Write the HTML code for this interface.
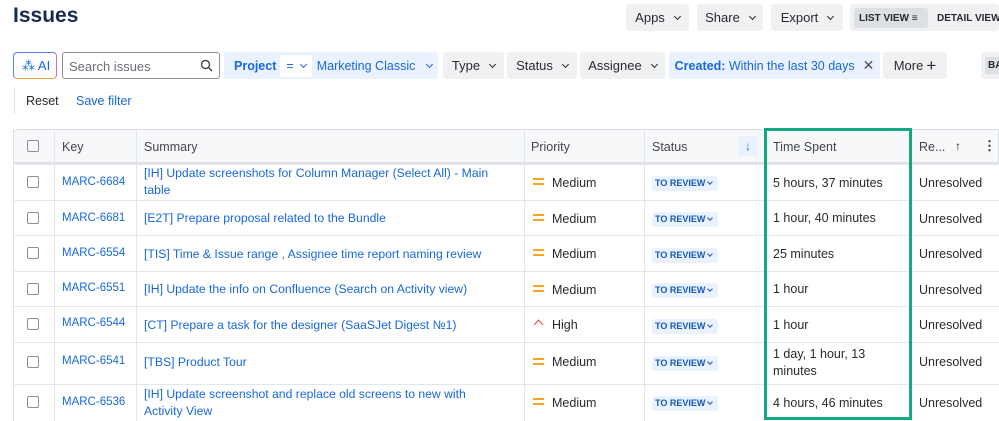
<!DOCTYPE html>
<html><head><meta charset="utf-8"><style>
*{box-sizing:border-box;margin:0;padding:0}
body{width:999px;height:421px;overflow:hidden;background:#fff;font-family:"Liberation Sans",sans-serif;color:#292a2e;position:relative;font-size:13px}
.a{position:absolute}
.btn{position:absolute;background:#f0f1f2;border-radius:3px;display:flex;align-items:center;justify-content:center;font-size:13px;color:#292a2e;white-space:nowrap}
.chev{display:inline-block;width:5px;height:5px;border-right:1.6px solid currentColor;border-bottom:1.6px solid currentColor;transform:rotate(45deg);margin-left:10px;margin-top:-3px}
.blue{color:#1868db}
.hl{position:absolute;background:#e3e6ea;height:1px;left:13px;width:986px}
.vl{position:absolute;background:#e3e6ea;width:1px;top:129px;height:292px}
.cb{position:absolute;left:27px;width:12px;height:12px;border:1.5px solid #8c8f97;border-radius:2px}
.key{position:absolute;left:62px;font-size:11.5px;color:#1868db}
.sum{position:absolute;left:144px;font-size:12.2px;color:#1868db;line-height:17px;width:350px}
.pri{position:absolute;left:552px;font-size:12.5px}
.eq{position:absolute;left:533px;width:11px;height:7px;border-top:2px solid #f5a623;border-bottom:2px solid #f5a623}
.st{position:absolute;left:652px;background:#e9f2fe;color:#1558bc;font-size:9px;font-weight:bold;padding:2px 3px;border-radius:3px;height:15px;width:66px;line-height:11px;white-space:nowrap}
.st i{display:inline-block;width:4px;height:4px;border-right:1.3px solid #1558bc;border-bottom:1.3px solid #1558bc;transform:rotate(45deg);margin-left:3px;margin-bottom:2px}
.ts{position:absolute;left:773px;font-size:12.5px;line-height:17px;width:130px}
.res{position:absolute;left:919px;font-size:12.5px}
.th{position:absolute;top:140px;font-size:12.5px;color:#44464d}
</style></head><body>
<div class="a" style="left:13px;top:4px;font-size:21px;font-weight:bold;color:#172b4d">Issues</div>

<div class="btn" style="left:626px;top:4px;width:63px;height:27px">Apps<span class="chev"></span></div>
<div class="btn" style="left:697px;top:4px;width:66px;height:27px">Share<span class="chev"></span></div>
<div class="btn" style="left:771px;top:4px;width:72px;height:27px">Export<span class="chev"></span></div>
<div class="btn" style="left:850px;top:4px;width:149px;height:27px;justify-content:flex-start"></div>
<div class="a" style="left:854px;top:8px;width:74px;height:20px;background:#dcdfe4;border-radius:3px;font-size:10px;font-weight:bold;padding:5px 0 0 5px;color:#292a2e;white-space:nowrap">LIST VIEW <span style="font-weight:normal">&#8801;</span></div>
<div class="a" style="left:937px;top:13px;font-size:10px;font-weight:bold;color:#292a2e;white-space:nowrap">DETAIL VIEW</div>

<div class="a" style="left:13px;top:52px;width:44px;height:27px;border:1.5px solid #5b7ff5;border-right-color:#c66de0;border-bottom-color:#e8a040;border-radius:4px;font-size:13px;color:#1868db;padding:5px 0 0 8px;white-space:nowrap">&#8258; AI</div>
<div class="a" style="left:62px;top:52px;width:158px;height:27px;border:1px solid #8c8f97;border-radius:3px;font-size:13px;color:#6b6e76;padding:6px 0 0 6px">Search issues
<svg class="a" style="left:137px;top:6px" width="13" height="13" viewBox="0 0 13 13"><circle cx="5.5" cy="5.5" r="4" fill="none" stroke="#44464d" stroke-width="1.4"/><path d="M8.5 8.5L12 12" stroke="#44464d" stroke-width="1.4"/></svg></div>
<div class="btn blue" style="left:224px;top:52px;width:214px;height:27px;background:#e9f2fe;justify-content:flex-start;padding-left:10px;font-size:12.5px"><b>Project</b><span style="background:#fff;border-radius:3px;padding:4px 6px;margin:0 5px 0 4px;display:inline-flex;align-items:center">=<span class="chev" style="margin-left:7px"></span></span>Marketing Classic<span class="chev" style="margin-left:12px"></span></div>
<div class="btn" style="left:443px;top:52px;width:61px;height:27px">Type<span class="chev"></span></div>
<div class="btn" style="left:507px;top:52px;width:70px;height:27px">Status<span class="chev"></span></div>
<div class="btn" style="left:580px;top:52px;width:85px;height:27px">Assignee<span class="chev"></span></div>
<div class="btn blue" style="left:669px;top:52px;width:211px;height:27px;background:#e9f2fe;font-size:12.5px"><b>Created:</b>&nbsp;Within the last 30 days<span style="color:#505258;margin-left:8px;font-size:14px">&#10005;</span></div>
<div class="btn" style="left:883px;top:52px;width:64px;height:27px">More <span style="font-size:17px;margin-left:3px">+</span></div>
<div class="btn" style="left:981px;top:52px;width:20px;height:27px;justify-content:flex-start;padding-left:4px"><span style="background:#dcdfe4;padding:3px;font-size:10px;font-weight:bold">BA</span></div>

<div class="a" style="left:14px;top:87px;width:1px;height:27px;background:#dcdfe4"></div>
<div class="a" style="left:26px;top:94px;font-size:12.5px">Reset</div>
<div class="a blue" style="left:76px;top:94px;font-size:12.5px">Save filter</div>

<div class="a" style="left:13px;top:129px;width:986px;height:34px;background:#f7f8f9;border:1px solid #dcdfe4;border-radius:6px 0 0 0"></div>
<div class="a" style="left:13px;top:129px;width:1px;height:292px;background:#dcdfe4"></div>
<div class="cb" style="top:140px"></div>
<div class="th" style="left:62px">Key</div>
<div class="th" style="left:144px">Summary</div>
<div class="th" style="left:531px">Priority</div>
<div class="th" style="left:652px">Status</div>
<div class="a" style="left:738px;top:136px;width:20px;height:20px;background:#e9f2fe;color:#1868db;text-align:center;font-size:12px;line-height:20px">&#8595;</div>
<div class="th" style="left:773px">Time Spent</div>
<div class="th" style="left:919px">Re...</div>
<div class="a" style="left:955px;top:139px;font-size:12px">&#8593;</div>
<div class="a" style="left:983px;top:138px;font-size:13px;font-weight:bold">&#8942;</div>

<div class="vl" style="left:54px"></div><div class="vl" style="left:136px"></div><div class="vl" style="left:524px"></div><div class="vl" style="left:644px"></div><div class="vl" style="left:911px"></div>
<div class="hl" style="top:163px;height:2px"></div><div class="hl" style="top:200px"></div><div class="hl" style="top:235px"></div><div class="hl" style="top:271px"></div><div class="hl" style="top:306px"></div><div class="hl" style="top:342px"></div><div class="hl" style="top:384px"></div>

<div class="cb" style="top:176px"></div><div class="key" style="top:176px">MARC-6684</div><div class="sum" style="top:165px">[IH] Update screenshots for Column Manager (Select All) - Main table</div><div class="eq" style="top:178px"></div><div class="pri" style="top:176px">Medium</div><div class="st" style="top:176px">TO REVIEW<i></i></div><div class="ts" style="top:175px">5 hours, 37 minutes</div><div class="res" style="top:176px">Unresolved</div>

<div class="cb" style="top:212px"></div><div class="key" style="top:212px">MARC-6681</div><div class="sum" style="top:210px">[E2T] Prepare proposal related to the Bundle</div><div class="eq" style="top:214px"></div><div class="pri" style="top:212px">Medium</div><div class="st" style="top:212px">TO REVIEW<i></i></div><div class="ts" style="top:210px">1 hour, 40 minutes</div><div class="res" style="top:212px">Unresolved</div>

<div class="cb" style="top:247px"></div><div class="key" style="top:247px">MARC-6554</div><div class="sum" style="top:246px">[TIS] Time &amp; Issue range , Assignee time report naming review</div><div class="eq" style="top:249px"></div><div class="pri" style="top:247px">Medium</div><div class="st" style="top:248px">TO REVIEW<i></i></div><div class="ts" style="top:246px">25 minutes</div><div class="res" style="top:247px">Unresolved</div>

<div class="cb" style="top:283px"></div><div class="key" style="top:282px">MARC-6551</div><div class="sum" style="top:281px">[IH] Update the info on Confluence (Search on Activity view)</div><div class="eq" style="top:285px"></div><div class="pri" style="top:283px">Medium</div><div class="st" style="top:283px">TO REVIEW<i></i></div><div class="ts" style="top:281px">1 hour</div><div class="res" style="top:283px">Unresolved</div>

<div class="cb" style="top:318px"></div><div class="key" style="top:317px">MARC-6544</div><div class="sum" style="top:317px">[CT] Prepare a task for the designer (SaaSJet Digest №1)</div><div class="a" style="left:535px;top:321px;width:7px;height:7px;border-left:1.8px solid #e2483d;border-top:1.8px solid #e2483d;transform:rotate(45deg)"></div><div class="pri" style="top:318px">High</div><div class="st" style="top:319px">TO REVIEW<i></i></div><div class="ts" style="top:317px">1 hour</div><div class="res" style="top:318px">Unresolved</div>

<div class="cb" style="top:356px"></div><div class="key" style="top:355px">MARC-6541</div><div class="sum" style="top:354px">[TBS] Product Tour</div><div class="eq" style="top:358px"></div><div class="pri" style="top:355px">Medium</div><div class="st" style="top:356px">TO REVIEW<i></i></div><div class="ts" style="top:346px">1 day, 1 hour, 13 minutes</div><div class="res" style="top:355px">Unresolved</div>

<div class="cb" style="top:396px"></div><div class="key" style="top:396px">MARC-6536</div><div class="sum" style="top:386px;width:340px">[IH] Update screenshot and replace old screens to new with Activity View</div><div class="eq" style="top:398px"></div><div class="pri" style="top:396px">Medium</div><div class="st" style="top:396px">TO REVIEW<i></i></div><div class="ts" style="top:395px">4 hours, 46 minutes</div><div class="res" style="top:396px">Unresolved</div>

<div class="a" style="left:764px;top:128px;width:148px;height:292px;border:3px solid #14a882"></div>
</body></html>
